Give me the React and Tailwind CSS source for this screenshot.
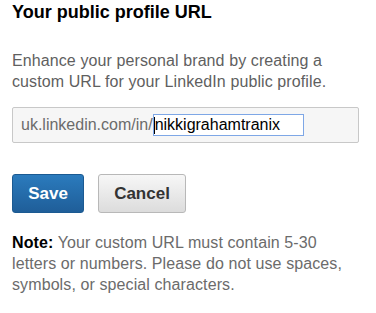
export default function App() {
  return (
    <div className="w-[376px] h-[313px] bg-white px-3 font-['Liberation_Sans',Arial,sans-serif]">
      <h2 className="pt-[1px] text-[18px] leading-[22px] font-bold text-black">Your public profile URL</h2>

      <p className="mt-[27px] w-[340px] text-[16px] leading-[21px] tracking-[0.1px] text-[#5f5f5f]">
        Enhance your personal brand by creating a custom URL for your LinkedIn public profile.
      </p>

      {/* URL field */}
      <div className="mt-[15px] flex h-[36px] w-[347px] items-center rounded-[2px] border border-[#c8c8c8] bg-[#f6f6f6] pl-[8px] text-[16px]">
        <span className="text-[#6b6b6b]">uk.linkedin.com/in/</span>
        <div className="flex h-[22px] w-[151px] items-center border border-[#7ea7e6] bg-white">
          <span className="h-[17px] w-px bg-black" />
          <span className="text-black">nikkigrahamtranix</span>
        </div>
      </div>

      {/* Buttons */}
      <div className="mt-[31px] flex gap-[14px]">
        <button className="h-[39px] w-[72px] rounded-[3px] border border-[#1b5a92] bg-gradient-to-b from-[#2b7bbd] to-[#1f5e99] text-[17px] font-bold text-white">
          Save
        </button>
        <button className="h-[39px] w-[88px] rounded-[3px] border border-[#b8b8b8] bg-gradient-to-b from-[#f7f7f7] to-[#dcdcdc] text-[17px] font-bold text-[#333333]">
          Cancel
        </button>
      </div>

      <p className="mt-[19px] w-[340px] text-[16px] leading-[21px] tracking-[0.1px] text-[#6b6b6b]">
        <span className="font-bold text-black">Note:</span> Your custom URL must contain 5-30 letters or numbers. Please do not use spaces, symbols, or special characters.
      </p>
    </div>
  );
}
